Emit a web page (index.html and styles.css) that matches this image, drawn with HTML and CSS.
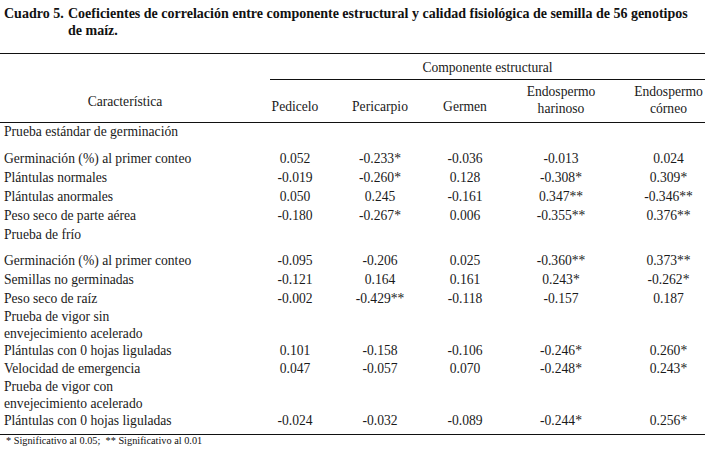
FILE: index.html
```html
<!DOCTYPE html>
<html lang="es">
<head>
<meta charset="utf-8">
<title>Cuadro 5</title>
<link rel="stylesheet" href="styles.css">
</head>
<body>
<div class="caption">
  <span class="cap-label">Cuadro 5.</span>
  <span class="cap-text">Coeficientes de correlación entre componente estructural y calidad fisiológica de semilla de 56 genotipos de maíz.</span>
</div>
<table class="corr">
  <colgroup>
    <col class="c-label">
    <col class="c-ped">
    <col class="c-per">
    <col class="c-ger">
    <col class="c-har">
    <col class="c-cor">
  </colgroup>
  <thead>
    <tr class="h1">
      <th></th>
      <th colspan="5" class="group">Componente estructural</th>
    </tr>
    <tr class="h2">
      <th class="char">Característica</th>
      <th class="single">Pedicelo</th>
      <th class="single">Pericarpio</th>
      <th class="single">Germen</th>
      <th class="double">Endospermo<br>harinoso</th>
      <th class="double">Endospermo<br>córneo</th>
    </tr>
  </thead>
  <tbody>
    <tr class="sec first"><td>Prueba estándar de germinación</td><td></td><td></td><td></td><td></td><td></td></tr>
    <tr><td>Germinación (%) al primer conteo</td><td>0.052</td><td>-0.233*</td><td>-0.036</td><td>-0.013</td><td>0.024</td></tr>
    <tr><td>Plántulas normales</td><td>-0.019</td><td>-0.260*</td><td>0.128</td><td>-0.308*</td><td>0.309*</td></tr>
    <tr><td>Plántulas anormales</td><td>0.050</td><td>0.245</td><td>-0.161</td><td>0.347**</td><td>-0.346**</td></tr>
    <tr><td>Peso seco de parte aérea</td><td>-0.180</td><td>-0.267*</td><td>0.006</td><td>-0.355**</td><td>0.376**</td></tr>
    <tr class="sec"><td>Prueba de frío</td><td></td><td></td><td></td><td></td><td></td></tr>
    <tr><td>Germinación (%) al primer conteo</td><td>-0.095</td><td>-0.206</td><td>0.025</td><td>-0.360**</td><td>0.373**</td></tr>
    <tr><td>Semillas no germinadas</td><td>-0.121</td><td>0.164</td><td>0.161</td><td>0.243*</td><td>-0.262*</td></tr>
    <tr><td>Peso seco de raíz</td><td>-0.002</td><td>-0.429**</td><td>-0.118</td><td>-0.157</td><td>0.187</td></tr>
    <tr class="vig"><td>Prueba de vigor sin<br>envejecimiento acelerado</td><td></td><td></td><td></td><td></td><td></td></tr>
    <tr class="tight"><td>Plántulas con 0 hojas liguladas</td><td>0.101</td><td>-0.158</td><td>-0.106</td><td>-0.246*</td><td>0.260*</td></tr>
    <tr class="tight"><td>Velocidad de emergencia</td><td>0.047</td><td>-0.057</td><td>0.070</td><td>-0.248*</td><td>0.243*</td></tr>
    <tr class="vig"><td>Prueba de vigor con<br>envejecimiento acelerado</td><td></td><td></td><td></td><td></td><td></td></tr>
    <tr class="tight last"><td>Plántulas con 0 hojas liguladas</td><td>-0.024</td><td>-0.032</td><td>-0.089</td><td>-0.244*</td><td>0.256*</td></tr>
  </tbody>
</table>
<p class="note">* Significativo al 0.05;&nbsp; ** Significativo al 0.01</p>
</body>
</html>
```

FILE: styles.css
```css
html, body {
  margin: 0;
  padding: 0;
  background: #ffffff;
}

body {
  width: 708px;
  height: 449px;
  overflow: hidden;
  color: #1a1a1a;
  font-family: "Liberation Serif", "DejaVu Serif", serif;
}

.caption {
  display: flex;
  padding: 5px 0 0 4px;
  font-size: 14px;
  font-weight: bold;
  line-height: 17px;
  color: #111;
}

.cap-label {
  flex: 0 0 64px;
}

.cap-text {
  flex: 0 0 636px;
}

.corr {
  margin-top: 14px;
  width: 705px;
  table-layout: fixed;
  border-collapse: collapse;
  font-size: 13.6px;
  border-top: 1px solid #111;
  border-bottom: 1px solid #111;
}

.c-label { width: 270px; }
.c-ped { width: 50px; }
.c-per { width: 120px; }
.c-ger { width: 50px; }
.c-har { width: 142px; }
.c-cor { width: 73px; }

.corr th {
  font-weight: normal;
  padding: 0;
  text-align: center;
}

.h1 th {
  line-height: 17px;
  padding: 5px 0 3px;
}

.h1 .group {
  border-bottom: 1px solid #111;
}

.h2 th {
  line-height: 17px;
  padding: 3px 0 5px;
  border-bottom: 1px solid #111;
}

.h2 .char {
  vertical-align: middle;
  padding-right: 20px;
  padding-top: 5px;
  padding-bottom: 3px;
}

.h2 .single {
  vertical-align: bottom;
  padding-bottom: 7px;
}

.h2 .double {
  vertical-align: top;
}

.corr td {
  padding: 0;
  line-height: 19px;
  text-align: center;
  white-space: nowrap;
  vertical-align: top;
}

.corr td:first-child {
  text-align: left;
  padding-left: 4px;
}

.sec td {
  padding-bottom: 7px;
}

.sec.first td {
  line-height: 15px;
  padding-top: 1px;
  padding-bottom: 10px;
}

.vig td {
  line-height: 17px;
}

.tight td {
  line-height: 18px;
}

.last td {
  padding-bottom: 4px;
}

.note {
  margin: 0;
  padding-left: 6px;
  font-size: 10.3px;
  line-height: 12px;
  color: #111;
}
```
